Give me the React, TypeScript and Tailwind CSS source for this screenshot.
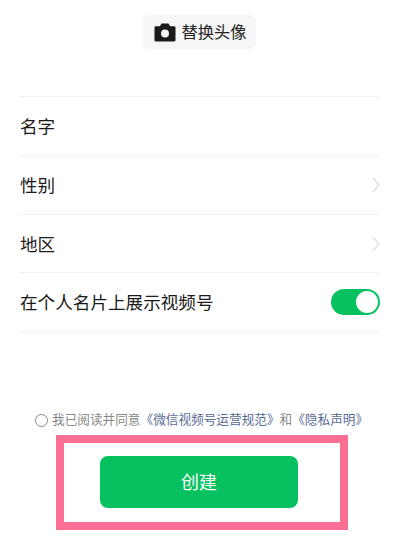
const font = { cjk: "font-['Liberation_Sans','Noto_Sans_CJK_SC',sans-serif]" }

function Row({ label, arrow }: { label: string; arrow?: boolean }) {
  return (
    <div className="flex h-[58.75px] items-center justify-between border-b border-[#f2f2f2]">
      <span className="pl-px pt-[3px] text-[17.6px] text-[#1a1a1a]">{label}</span>
      {arrow && (
        <svg width="8" height="16" viewBox="0 0 8 16" fill="none" className="mt-px">
          <path d="M1 1l6 7-6 7" stroke="#dcdcdc" strokeWidth="1.2" />
        </svg>
      )}
    </div>
  )
}

export default function App() {
  return (
    <div className={`flex h-[542px] w-[400px] flex-col overflow-hidden bg-white ${font.cjk}`}>
      <div className="flex justify-center pr-[2px] pt-[15px]">
        <button
          type="button"
          className="flex h-[34px] w-[113px] items-center gap-[6px] rounded-md bg-[#f6f6f6] pl-[11px] text-[16.3px] text-[#222]"
        >
          <svg width="22" height="19" viewBox="0 0 22 19" className="shrink-0">
            <path
              fillRule="evenodd"
              fill="#1a1a1a"
              d="M7.5 0.5h7l1.6 2.7h4c.8 0 1.4.6 1.4 1.4v12.5c0 .8-.6 1.4-1.4 1.4H1.9c-.8 0-1.4-.6-1.4-1.4V4.6c0-.8.6-1.4 1.4-1.4h4L7.5.5zM11 6.6a4 4 0 1 0 0 8 4 4 0 0 0 0-8z"
            />
          </svg>
          <span className="pt-px">替换头像</span>
        </button>
      </div>

      <div className="ml-[19px] mr-[20px] mt-[47px] border-t border-[#f2f2f2]">
        <Row label="名字" />
        <Row label="性别" arrow />
        <Row label="地区" arrow />
        <div className="flex h-[58.75px] items-center justify-between border-b border-[#f2f2f2]">
          <span className="pl-px pt-[3px] text-[17.6px] text-[#1a1a1a]">在个人名片上展示视频号</span>
          <div className="flex h-[26px] w-[49px] items-center justify-end rounded-full bg-[#07c160] pr-0.5">
            <div className="h-[22px] w-[22px] rounded-full bg-white" />
          </div>
        </div>
      </div>

      <div className="ml-[35px] mt-[80px] flex items-center whitespace-nowrap text-[12.65px] leading-4 text-[#888]">
        <span className="mr-[4px] h-[13px] w-[13px] rounded-full border-[1.5px] border-[#888]" />
        <span>我已阅读并同意</span>
        <span className="text-[#576b95]">《微信视频号运营规范》</span>
        <span>和</span>
        <span className="text-[#576b95]">《隐私声明》</span>
      </div>

      <div className="ml-[56px] mt-[7px] flex h-[95px] w-[292px] items-center border-[8px] border-[#fb6f95] bg-white pb-px pl-[36px]">
        <button
          type="button"
          className="h-[52px] w-[198px] rounded-lg bg-[#07c160] text-[18px] text-white"
        >
          <span className="relative top-px">创建</span>
        </button>
      </div>
    </div>
  )
}
